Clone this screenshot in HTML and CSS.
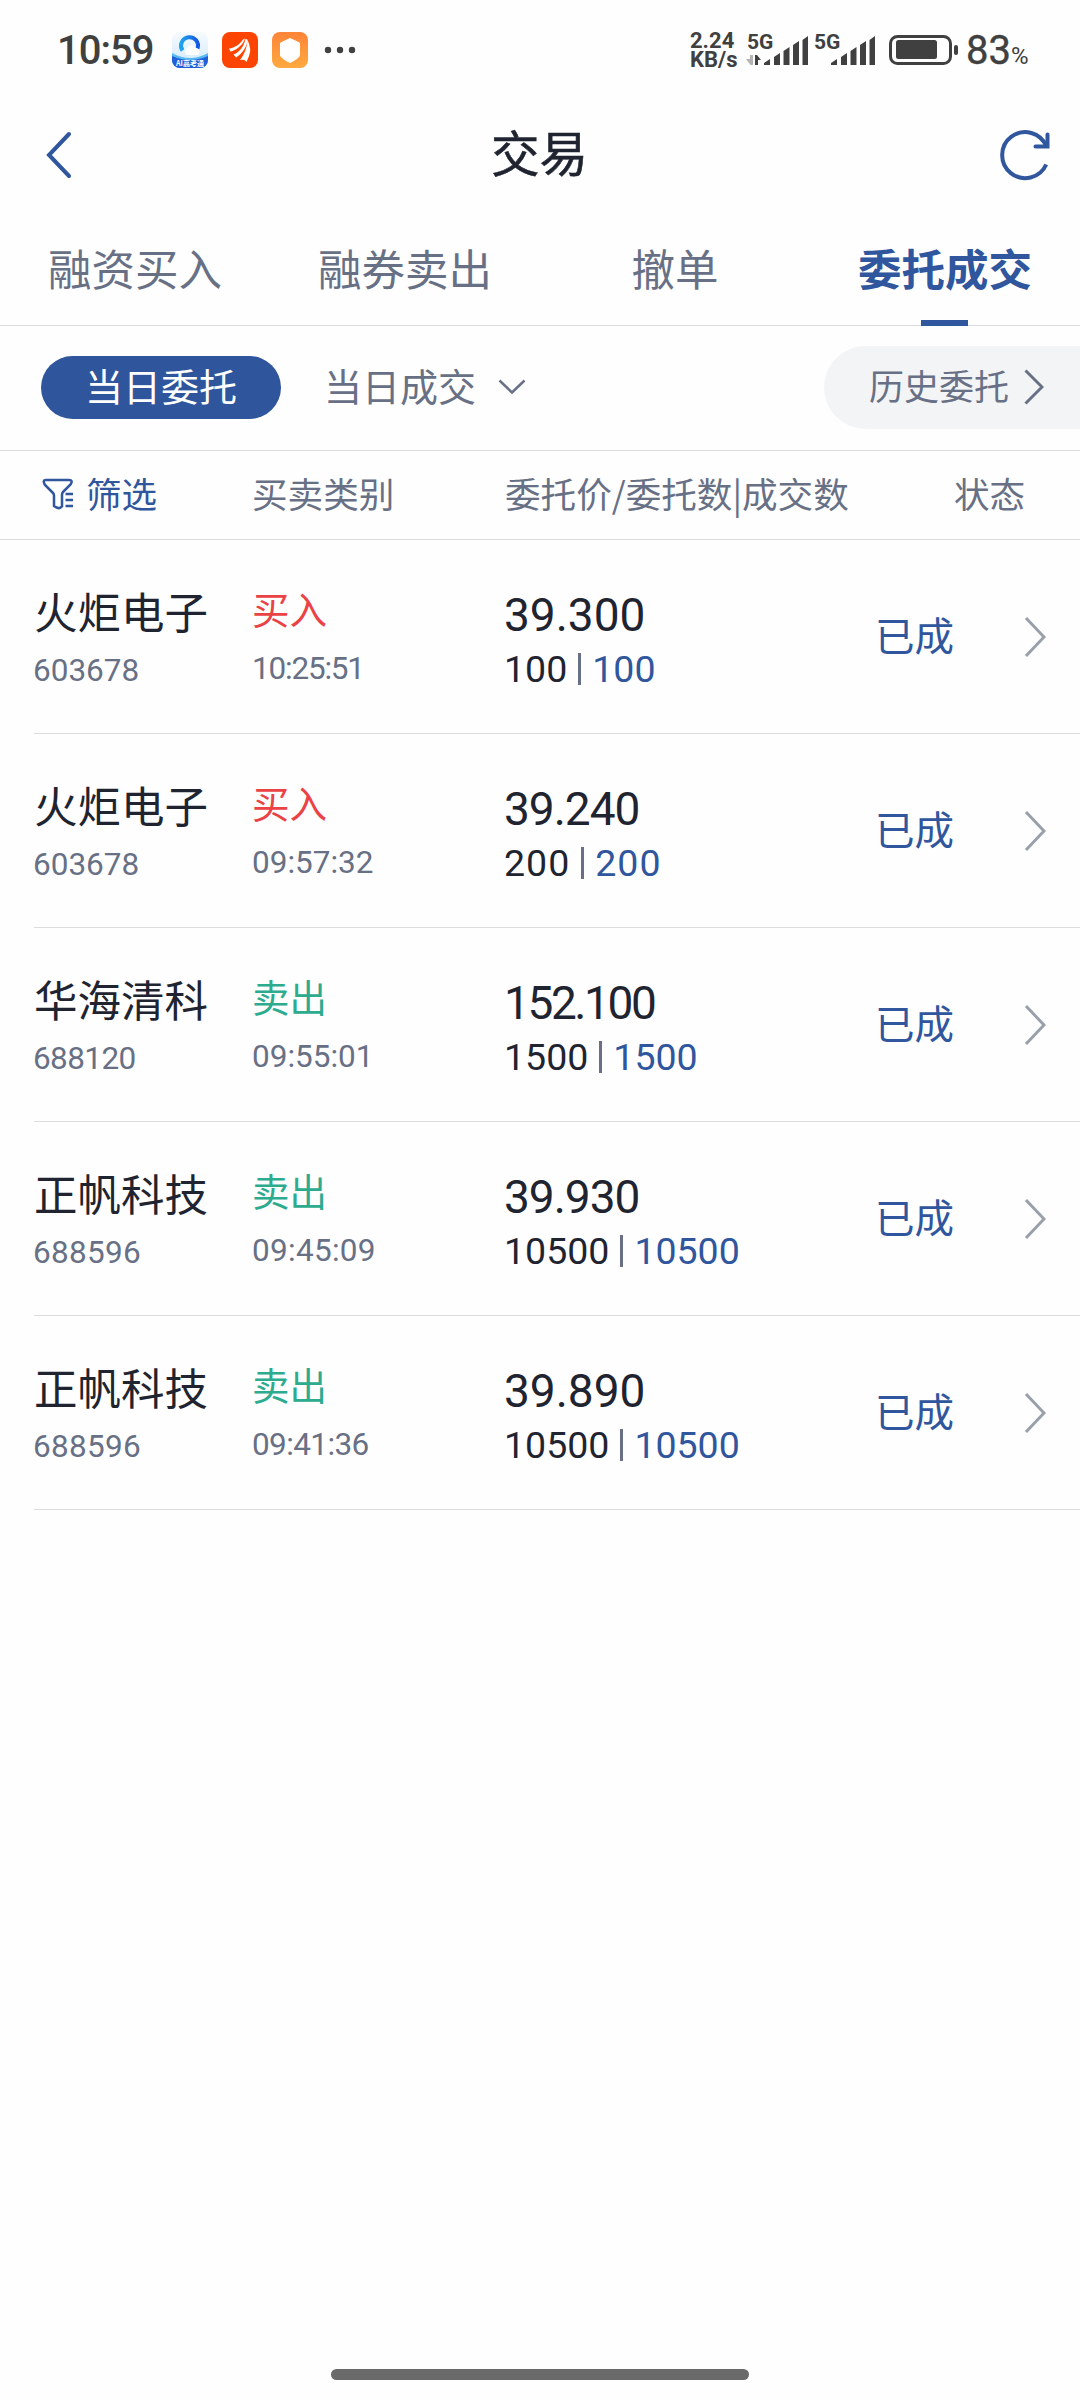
FILE: index.html
```html
<!DOCTYPE html>
<html lang="zh-CN">
<head>
<meta charset="utf-8">
<title>交易</title>
<link rel="stylesheet" href="styles.css">
</head>
<body>
<svg class="defs" width="0" height="0"><symbol id="next" viewBox="0 0 22 42"><path d="M2 2 20 21 2 40"/></symbol></svg>
<div class="statusbar">
  <span class="clock">10:59</span>
  <div class="apps">
    <svg width="36" height="36" viewBox="0 0 36 36">
      <defs>
        <linearGradient id="sky" x1="0" y1="0" x2="0" y2="1"><stop offset="0" stop-color="#f7fbff"/><stop offset="1" stop-color="#cfe9fb"/></linearGradient>
        <linearGradient id="ring" x1="0" y1="0" x2="1" y2="0"><stop offset="0" stop-color="#1fa4ef"/><stop offset="1" stop-color="#1557e0"/></linearGradient>
        <clipPath id="tile"><rect width="36" height="36" rx="8"/></clipPath>
      </defs>
      <g clip-path="url(#tile)">
        <rect width="36" height="36" fill="url(#sky)"/>
        <path d="M0 21Q18 31 36 21V36H0Z" fill="#58b9f2"/>
        <path d="M0 24Q18 32 36 24V36H0Z" fill="#1f5fd8"/>
        <path d="M10.500 18.500A8.500 8.500 0 1 1 25.500 16.500" fill="none" stroke="url(#ring)" stroke-width="4"/>
        <path d="M15 23a4 4 0 0 1 0-7 5 5 0 0 1 9 0 4 4 0 0 1 2 7Z" fill="#fff"/>
        <text x="18" y="34" class="app-label">AI高考通</text>
      </g>
    </svg>
    <svg width="36" height="36" viewBox="0 0 36 36"><rect width="36" height="36" rx="8" fill="#fe4402"/><path d="M7 16.500C13 16 18 12 21 7.500L23 6.500C21 13 14 18.500 8.500 19.500ZM11.500 22.500C18 20 22 14 23.500 7L25.500 7.500C25.500 14 20 22 14 25.500ZM18 28C22 23 25 16 25.500 8Q30 17 27 24L24.500 30Q23 27 18 28Z" fill="#fff"/></svg>
    <svg width="36" height="36" viewBox="0 0 36 36"><defs><linearGradient id="amber" x1="0" y1="0" x2="0" y2="1"><stop offset="0" stop-color="#fe8438"/><stop offset="1" stop-color="#fea93f"/></linearGradient></defs><rect width="36" height="36" rx="8" fill="url(#amber)"/><path d="M18 6.500 27.500 11V23Q27.500 26 18 30.500 8.500 26 8.500 23V11Z" fill="#fff" stroke="#fff" stroke-linejoin="round"/></svg>
  </div>
  <svg class="more" width="32" height="8"><circle cx="4" cy="4" r="3.200"/><circle cx="16" cy="4" r="3.200"/><circle cx="28" cy="4" r="3.200"/></svg>
  <div class="speed"><span>2.24</span><span>KB/s</span></div>
  <svg class="signal" width="64" height="42" viewBox="0 -4 64 42"><text x="1" y="16">5G</text><path d="M4 22h3v10H4.500L0 26h4Z" fill="#b4b4b4"/><path d="M9 22h2l4 5h-3v5H9Z"/><path d="M18 30l6-4v6h-6ZM28 24l6-4v12h-6ZM37.500 18l6-4v18h-6ZM47 12l6-4v24h-6ZM56.500 7l5.500-4v29h-5.500Z"/></svg>
  <svg class="signal second" width="64" height="42" viewBox="0 -4 64 42"><text x="1" y="16">5G</text><path d="M18 30l6-4v6h-6ZM28 24l6-4v12h-6ZM37.500 18l6-4v18h-6ZM47 12l6-4v24h-6ZM56.500 7l5.500-4v29h-5.500Z"/></svg>
  <svg class="battery" width="70" height="30" viewBox="0 0 70 30"><rect x="1.500" y="1.500" width="60" height="27" rx="7" fill="none" stroke="#404040" stroke-width="3"/><rect x="7" y="5" width="41" height="19" rx="2.500"/><rect x="65" y="10" width="4" height="10" rx="2"/></svg>
  <span class="level">83<small>%</small></span>
</div>
<header class="titlebar">
  <svg class="line-icon" width="26" height="48" viewBox="0 0 26 48"><path d="M23 3 3 24 23 45"/></svg>
  <h1>交易</h1>
  <svg class="line-icon" width="52" height="52" viewBox="0 0 52 52"><path d="M46.500 17.500A23 23 0 1 0 46.200 35.500" stroke-linecap="butt"/><path d="M47.500 5.500V17.500H35.500" stroke-linejoin="miter"/></svg>
</header>
<nav class="tabs"><span>融资买入</span><span>融券卖出</span><span>撤单</span><span class="active">委托成交</span></nav>
<div class="filters">
  <span class="pill">当日委托</span>
  <span class="fills">当日成交</span>
  <svg class="down" width="28" height="16" viewBox="0 0 28 16"><path d="M1.500 1.500 14 13.500 26.500 1.500"/></svg>
  <div class="history"><span>历史委托</span><svg width="20" height="36" viewBox="0 0 20 36"><path d="M1.500 1.500 18 18 1.500 34.500"/></svg></div>
</div>
<div class="columns">
  <div class="sift"><svg width="32" height="32" viewBox="0 0 32 32"><path d="M20 27V28.500Q17 32 12 28V17.500Q12 16 11 15L3 7Q0 2 4 2H27Q31.500 2 28.500 6.500L21 14Q20 15 20 17V27M23.500 16H31M23.500 22H31M23.500 28H31"/></svg><span>筛选</span></div>
  <span>买卖类别</span><span>委托价/委托数|成交数</span><span class="state-head">状态</span>
</div>
<main>
  <div class="order"><div class="stock"><b>火炬电子</b><i>603678</i></div><div class="side buy"><b>买入</b><i class="ones">10:25:51</i></div><div class="deal"><b>39.300</b><p><span>100</span><s></s><em>100</em></p></div><span class="state">已成</span><svg class="go"><use href="#next"/></svg></div>
  <div class="order"><div class="stock"><b>火炬电子</b><i>603678</i></div><div class="side buy"><b>买入</b><i>09:57:32</i></div><div class="deal"><b class="snug">39.240</b><p class="wide"><span>200</span><s></s><em>200</em></p></div><span class="state">已成</span><svg class="go"><use href="#next"/></svg></div>
  <div class="order"><div class="stock"><b>华海清科</b><i class="snug">688120</i></div><div class="side sell"><b>卖出</b><i>09:55:01</i></div><div class="deal"><b class="tight">152.100</b><p><span>1500</span><s></s><em>1500</em></p></div><span class="state">已成</span><svg class="go"><use href="#next"/></svg></div>
  <div class="order"><div class="stock"><b>正帆科技</b><i class="loose">688596</i></div><div class="side sell"><b>卖出</b><i class="loose">09:45:09</i></div><div class="deal"><b class="snug">39.930</b><p><span>10500</span><s></s><em>10500</em></p></div><span class="state">已成</span><svg class="go"><use href="#next"/></svg></div>
  <div class="order"><div class="stock"><b>正帆科技</b><i class="loose">688596</i></div><div class="side sell"><b>卖出</b><i class="snug">09:41:36</i></div><div class="deal"><b>39.890</b><p><span>10500</span><s></s><em>10500</em></p></div><span class="state">已成</span><svg class="go"><use href="#next"/></svg></div>
</main>
<footer><div class="homebar"></div></footer>
</body>
</html>
```
FILE: styles.css
```css
* { box-sizing: border-box; margin: 0; padding: 0; }
body { width: 1080px; height: 2400px; display: flex; flex-direction: column; background: #fefefe; color: #1f2430; font-family: "Noto Sans CJK SC", sans-serif; white-space: nowrap; overflow: hidden; }
svg { display: block; flex: none; }
.defs { position: absolute; }
b, i, em { font-weight: 400; font-style: normal; }

.statusbar { height: 100px; padding-left: 57px; display: flex; align-items: center; color: #404040; fill: #404040; font-family: Roboto, sans-serif; }
.clock { width: 115px; font-size: 40px; font-weight: 500; letter-spacing: -1px; }
.apps { display: flex; gap: 14px; }
.app-label { fill: #fff; font: bold 7px "Noto Sans CJK SC", sans-serif; text-anchor: middle; }
.more { margin-left: 16px; }
.speed { width: 56px; margin-left: 334px; display: flex; flex-direction: column; font-size: 22px; font-weight: 700; line-height: 19px; }
.signal text { font-size: 21px; font-weight: 700; }
.second { margin-left: 3px; }
.battery { margin-left: 12px; }
.level { margin-left: 7px; font-size: 40px; font-weight: 400; -webkit-text-stroke: .4px #404040; }
.level small { font-size: 24px; -webkit-text-stroke: 0; }

.titlebar { height: 110px; padding: 0 28px 0 46px; display: grid; grid-template-columns: 52px 1fr 52px; align-items: center; }
.titlebar h1 { font-size: 48.500px; font-weight: 400; -webkit-text-stroke: .6px #1f2430; text-align: center; line-height: 60px; padding-right: 19px; margin-top: -8px; }
.line-icon { fill: none; stroke: #30569d; stroke-width: 4; stroke-linecap: round; }

.tabs { height: 116px; display: grid; grid-template-columns: repeat(4, 1fr); text-align: center; border-bottom: 1px solid #dcdcde; color: #687085; font-size: 43.500px; line-height: 116px; }
.active { color: #30569d; font-weight: 700; position: relative; }
.active::after { content: ""; position: absolute; left: 50%; bottom: 0; width: 47px; height: 6px; margin-left: -24px; background: #30569d; }

.filters { height: 125px; padding: 0 0 2px 41px; display: flex; align-items: center; border-bottom: 1px solid #dcdcde; color: #687085; font-size: 38px; }
.pill { width: 240px; height: 63px; border-radius: 32px; background: #2f559c; color: #fff; text-align: center; line-height: 57px; }
.fills { margin-left: 43px; line-height: 57px; height: 63px; }
.down { margin-left: 22px; fill: none; stroke: #687085; stroke-width: 2.500; }
.history { width: 256px; height: 83px; margin-left: auto; padding-left: 45px; display: flex; align-items: center; gap: 15px; border-radius: 42px 0 0 42px; background: #f3f4f6; font-size: 35px; }
.history span { margin-top: -6px; }
.history svg { fill: none; stroke: #687085; stroke-width: 3; margin-top: -1px; }

.columns { height: 89px; padding: 0 0 5px 42px; display: grid; grid-template-columns: 210px 253px 449px 1fr; align-items: center; border-bottom: 1px solid #dcdcde; color: #687085; font-size: 35.600px; line-height: 80px; }
.sift { display: flex; align-items: center; gap: 12px; color: #30569d; }
.sift svg { fill: none; stroke: #30569d; stroke-width: 2.500; margin-top: 3px; }

main { padding-left: 34px; flex: 1; }
.order { height: 194px; display: grid; grid-template-columns: 218px 252px 371px 149px 1fr; align-items: center; border-bottom: 1px solid #dcdcde; }
.order div { display: flex; flex-direction: column; }
.stock b { font-size: 43.500px; line-height: 56px; }
.order i { font: 31.500px/38px Roboto, sans-serif; color: #687085; }
.order .stock i { margin: 13px 0 0 -1px; }
.order .side { margin-top: -3px; }
.side b { font-size: 37.500px; line-height: 52px; }
.side i { margin-top: 16px; }
.ones { letter-spacing: -1.200px; }
.snug { letter-spacing: -.6px; }
.loose { letter-spacing: .3px; }
.buy b { color: #ea4245; }
.sell b { color: #2dab8f; }
.deal { font-family: Roboto, sans-serif; padding-top: 7px; }
.deal b { font-size: 46px; line-height: 54px; }
.deal .snug { letter-spacing: -1px; }
.deal .tight { letter-spacing: -2.400px; }
.deal p { margin-top: 4px; display: flex; align-items: center; font-size: 37.500px; line-height: 46px; }
.deal s { width: 3px; height: 32px; margin: 0 11px; background: #687085; }
.deal .wide { letter-spacing: 1px; }
.deal em { color: #30569d; }
.state { color: #30569d; font-size: 39.500px; line-height: 56px; margin-top: -6px; }
.go { width: 22px; height: 42px; fill: none; stroke: #9aa0ab; stroke-width: 3; }

footer { height: 31px; display: flex; justify-content: center; }
.homebar { width: 418px; height: 11px; border-radius: 6px; background: #6a6a6a; }
```
